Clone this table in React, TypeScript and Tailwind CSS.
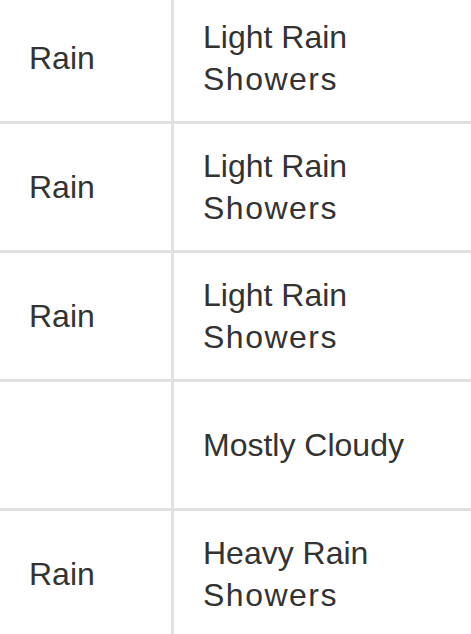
export default function App() {
  const rows: { a: string; b: string[] }[] = [
    { a: "Rain", b: ["Light Rain", "Showers"] },
    { a: "Rain", b: ["Light Rain", "Showers"] },
    { a: "Rain", b: ["Light Rain", "Showers"] },
    { a: "", b: ["Mostly Cloudy"] },
    { a: "Rain", b: ["Heavy Rain", "Showers"] },
  ];
  return (
    <div
      className="w-[471px] h-[634px] overflow-hidden bg-white text-[#333333]"
      style={{ fontFamily: '"Liberation Sans", Arial, sans-serif' }}
    >
      <div className="-mt-[5px] flex flex-col">
        {rows.map((r, i) => (
          <div key={i} className="flex border-b-[3px] border-[#e0e0e0] h-[129px] shrink-0">
            <div className="w-[171px] shrink-0 flex items-center pl-[29px] text-[32px] leading-[42px]">
              {r.a}
            </div>
            <div className="flex-1 border-l-[3px] border-[#e0e0e0] flex flex-col justify-center pl-[29px] text-[32px] leading-[42px] whitespace-nowrap">
              {r.b.map((l, j) => (
                <div key={j} className={l === "Showers" ? "tracking-[1.5px]" : ""}>
                  {l}
                </div>
              ))}
            </div>
          </div>
        ))}
      </div>
    </div>
  );
}
